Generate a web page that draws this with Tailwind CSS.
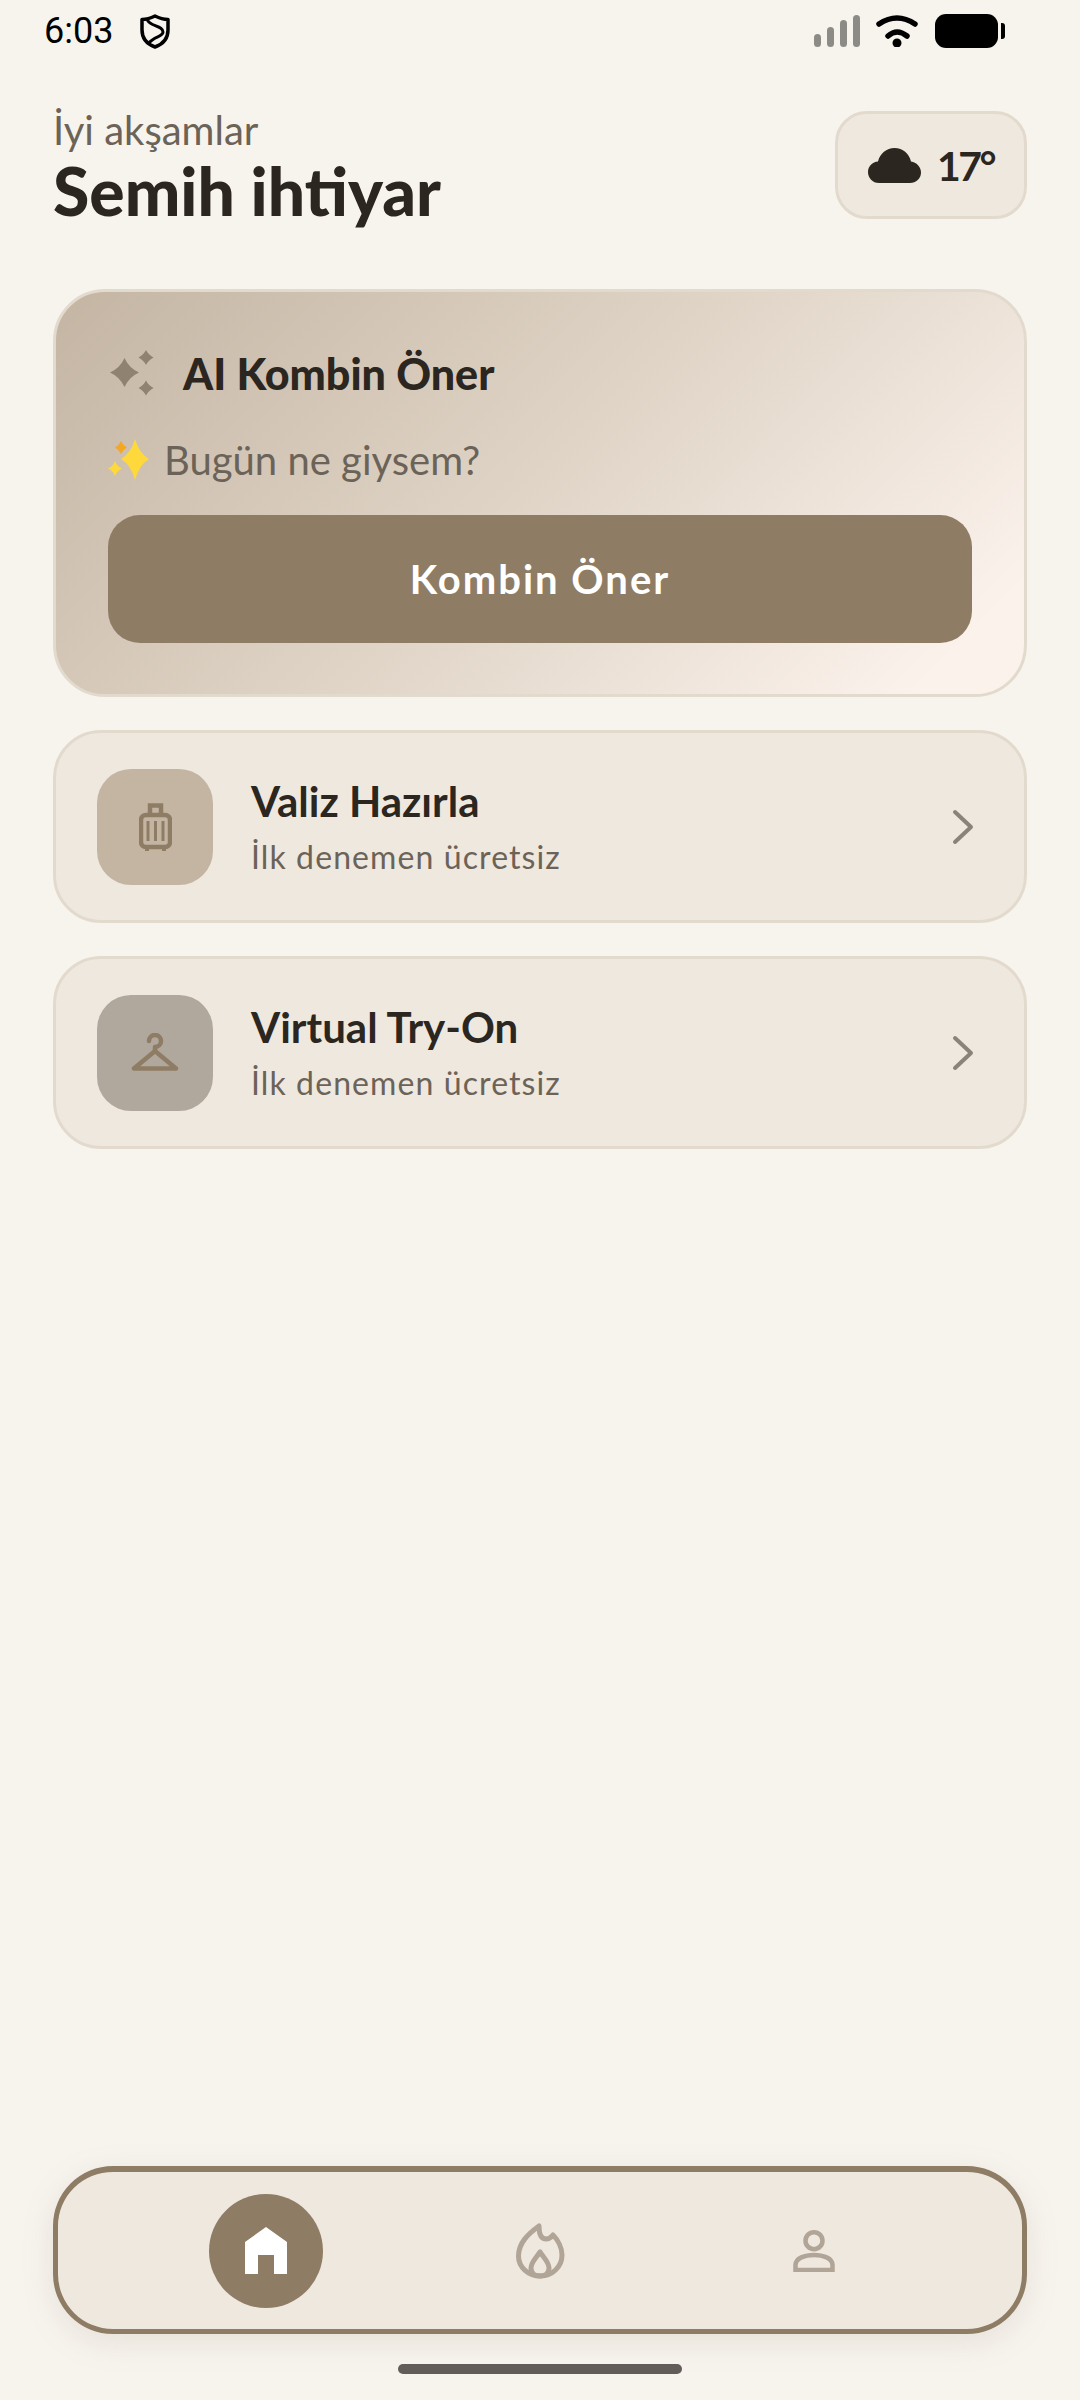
<!DOCTYPE html>
<html lang="tr">
<head>
    <meta charset="UTF-8">
    <meta name="viewport" content="width=device-width, initial-scale=1.0">
    <title>Ana Sayfa</title>
    <script src="https://cdn.jsdelivr.net/npm/@tailwindcss/browser@4"></script>
</head>
<body class="bg-[#F7F4EE] font-['Lato',sans-serif] text-[#2C2620]">
<div class="w-[1080px] h-[2400px] flex flex-col overflow-hidden">

    <!-- status bar -->
    <div class="h-[62px] pl-[44px] pr-[75px] flex items-center justify-between">
        <div class="flex items-center gap-[27px]">
            <span class="font-['Roboto',sans-serif] text-[36px] leading-none text-black">6:03</span>
            <svg class="w-[30px] h-[35px]" viewBox="0 0 30 35" fill="none" stroke="#000" stroke-width="3.500" stroke-linejoin="round">
                <path d="M15 2C20 4.500 24 5.500 28 5.500V16C28 25 22 30.500 15 33C8 30.500 2 25 2 16V5.500C6 5.500 10 4.500 15 2Z"/>
                <path d="M7 5C9 13 23 11 23 18C23 23 14 22 9 29" stroke-width="3"/>
            </svg>
        </div>
        <div class="flex items-center">
            <div class="flex items-end gap-[6px] h-[32px]">
                <div class="w-[7px] h-[13px] rounded-full bg-[#8C8B86]"></div>
                <div class="w-[7px] h-[20px] rounded-full bg-[#8C8B86]"></div>
                <div class="w-[7px] h-[27px] rounded-full bg-[#8C8B86]"></div>
                <div class="w-[7px] h-[32px] rounded-full bg-[#8C8B86]"></div>
            </div>
            <svg class="ml-[16px] w-[43px] h-[32px]" viewBox="0 0 43 32" fill="none" stroke="#000" stroke-width="5.500" stroke-linecap="round">
                <path d="M3 9Q21 -3 39 9"/>
                <path d="M12 21Q21 13 31 21"/>
                <circle cx="21" cy="28" r="4.500" fill="#000" stroke="none"/>
            </svg>
            <div class="ml-[16px] w-[63px] h-[34px] rounded-[11px] bg-black"></div>
            <div class="ml-[3px] w-[4px] h-[16px] rounded-r-[3px] bg-black"></div>
        </div>
    </div>

    <div class="px-[53px] flex-1 flex flex-col">
        <!-- header -->
        <div class="mt-[49px] flex items-start justify-between">
            <div class="mt-[-3px]">
                <p class="text-[40px] leading-[44px] text-[#6B6358]">İyi akşamlar</p>
                <h1 class="text-[66px] leading-[72px] font-black mt-[3px]">Semih ihtiyar</h1>
            </div>
            <div class="w-[192px] h-[108px] rounded-[32px] border-[3px] border-[#E3DACE] bg-[#EFE8DF] flex items-center justify-center gap-[16px]">
                <svg class="w-[53px] h-[35px] fill-[#2C2620]" viewBox="0 0 53 35">
                    <path d="M11 35C4.500 35 0 30 0 24C0 18 4.500 14 10 13.500C12 5.500 18.500 0 26.500 0C35 0 41 5.500 43 13.500C48.500 14.500 53 18.500 53 24.500C53 30.500 48 35 42 35Z"/>
                </svg>
                <span class="text-[41px] leading-none font-bold tracking-[-2.500px]">17°</span>
            </div>
        </div>

        <!-- ai card -->
        <div class="mt-[62px] h-[408px] rounded-[52px] border-[3px] border-[#E3DACE] bg-[linear-gradient(135deg,#C4B5A3_0%,#E3D8CB_55%,#FBF2EC_92%)] px-[52px] pt-[56px]">
            <div class="flex items-center h-[50px]">
                <svg class="ml-[2px] w-[44px] h-[46px] fill-[#8F8270]" viewBox="0 0 44 46">
                    <path d="M14.500 8Q19 18 29 22.500Q19 27 14.500 37Q10 27 0 22.500Q10 18 14.500 8Z"/>
                    <path d="M36 0Q38.500 5 43.500 7.500Q38.500 10 36 15Q33.500 10 28.500 7.500Q33.500 5 36 0Z"/>
                    <path d="M36 30.500Q38.500 35.500 43.500 38Q38.500 40.500 36 45.500Q33.500 40.500 28.500 38Q33.500 35.500 36 30.500Z"/>
                </svg>
                <h2 class="ml-[29px] text-[43px] leading-none font-black">AI Kombin Öner</h2>
            </div>
            <div class="mt-[40px] flex items-center h-[44px]">
                <svg class="w-[42px] h-[42px]" viewBox="0 0 42 42">
                    <path fill="#FFD83B" d="M27 0Q31 14 41 20Q31 26 27 41Q23 26 13 20Q23 14 27 0Z"/>
                    <path fill="#F5A623" d="M13 2Q15 6.500 19 8.500Q15 10.500 13 15Q11 10.500 7 8.500Q11 6.500 13 2Z"/>
                    <path fill="#FFD83B" d="M7 22Q9 27.500 14 29.500Q9 31.500 7 37Q5 31.500 0 29.500Q5 27.500 7 22Z"/>
                </svg>
                <p class="ml-[14px] text-[40px] leading-none text-[#6B6358]">Bugün ne giysem?</p>
            </div>
            <button class="mt-[33px] w-full h-[128px] rounded-[32px] bg-[#8E7C65] text-white text-[40px] font-bold tracking-[2px]">Kombin Öner</button>
        </div>

        <!-- rows -->
        <div class="mt-[33px] flex flex-col gap-[33px]">
            <div class="h-[193px] rounded-[48px] border-[3px] border-[#E3DACE] bg-[#EFE8DF] pl-[41px] pr-[50px] flex items-center">
                <div class="w-[116px] h-[116px] rounded-[34px] bg-[#C4B5A3] flex items-center justify-center">
                    <svg class="w-[33px] h-[48px]" viewBox="0 0 33 48" fill="none" stroke="#8E7C65" stroke-width="4.500">
                        <rect x="2" y="12" width="29" height="32" rx="5"/>
                        <path d="M11 11V2.500H22V11"/>
                        <path d="M9 18V38M16.500 18V38M24 18V38" stroke-width="3"/>
                        <path d="M6 46H10M23 46H27" stroke-width="4"/>
                    </svg>
                </div>
                <div class="ml-[38px] flex-1">
                    <h3 class="text-[42px] leading-[48px] font-bold">Valiz Hazırla</h3>
                    <p class="mt-[13px] text-[32px] leading-[38px] tracking-[1.100px] text-[#6B6358]">İlk denemen ücretsiz</p>
                </div>
                <svg class="w-[22px] h-[36px]" viewBox="0 0 22 36" fill="none" stroke="#8A8377" stroke-width="4" stroke-linecap="round" stroke-linejoin="round">
                    <path d="M3 3L19 18L3 33"/>
                </svg>
            </div>
            <div class="h-[193px] rounded-[48px] border-[3px] border-[#E3DACE] bg-[#EFE8DF] pl-[41px] pr-[50px] flex items-center">
                <div class="w-[116px] h-[116px] rounded-[34px] bg-[#B0A89C] flex items-center justify-center">
                    <svg class="w-[48px] h-[39px]" viewBox="0 0 48 39" fill="none" stroke="#8E7C65" stroke-width="4.500" stroke-linecap="round" stroke-linejoin="round">
                        <path d="M18 8A6 6 0 1 1 24 14V18"/>
                        <path d="M24 18L3 35.500H45Z"/>
                    </svg>
                </div>
                <div class="ml-[38px] flex-1">
                    <h3 class="text-[42px] leading-[48px] font-bold">Virtual Try-On</h3>
                    <p class="mt-[13px] text-[32px] leading-[38px] tracking-[1.100px] text-[#6B6358]">İlk denemen ücretsiz</p>
                </div>
                <svg class="w-[22px] h-[36px]" viewBox="0 0 22 36" fill="none" stroke="#8A8377" stroke-width="4" stroke-linecap="round" stroke-linejoin="round">
                    <path d="M3 3L19 18L3 33"/>
                </svg>
            </div>
        </div>

        <!-- bottom nav -->
        <div class="mt-auto h-[168px] rounded-[60px] border-[5px] border-t-[6px] border-[#8E7C65] bg-[#EFE8DF] shadow-[0_8px_32px_rgba(139,122,100,0.15)] px-[71px] grid grid-cols-3 items-center justify-items-center">
            <div class="w-[114px] h-[114px] rounded-full bg-[#8E7C65] flex items-center justify-center">
                <svg class="w-[42px] h-[47px] fill-white" viewBox="0 0 42 47">
                    <path d="M21 0L42 15V47H29V28H13V47H0V15Z"/>
                </svg>
            </div>
            <svg class="w-[49px] h-[57px]" viewBox="0 0 49 57" fill="none" stroke="#B0A596" stroke-width="5" stroke-linejoin="round">
                <path d="M23 4C23 10 24 17 30 17C33 17 35.500 15 37 13C42 18 46 26 46 33C46 45 36 54 24.500 54C12 54 2.500 45 2.500 34C2.500 21 12 12 23 4Z"/>
                <path d="M24 30C20 36 15 40 15 46C15 51 19 54 24 54C29 54 33 51 33 46C33 40 28 36 24 30Z"/>
            </svg>
            <svg class="w-[42px] h-[43px]" viewBox="0 0 42 43" fill="none" stroke="#B0A596" stroke-width="4.500">
                <circle cx="21" cy="11.700" r="8.500"/>
                <path d="M2.500 41V36C2.500 29 12 26 21 26C30 26 39.500 29 39.500 36V41Z"/>
            </svg>
        </div>
        <div class="mt-[30px] mb-[26px] mx-auto w-[284px] h-[10px] rounded-full bg-[#625D58]"></div>
    </div>
</div>
</body>
</html>
